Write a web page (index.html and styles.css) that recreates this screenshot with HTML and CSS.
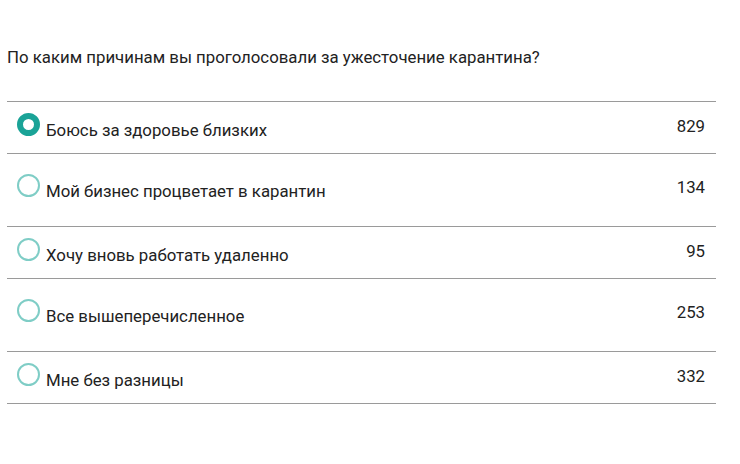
FILE: index.html
```html
<!doctype html>
<html lang="ru">
  <head>
    <meta charset="UTF-8" />
    <meta name="viewport" content="width=device-width, initial-scale=1.0" />
    <title>Опрос</title>
    <link rel="stylesheet" href="styles.css">
  </head>

  <body>
    <div class="poll">
      <p class="question">По каким причинам вы проголосовали за ужесточение карантина?</p>
      <ul class="options">
        <li class="option">
          <span class="radio checked"></span>
          <span class="label">Боюсь за здоровье близких</span>
          <span class="count">829</span>
        </li>
        <li class="option tall">
          <span class="radio"></span>
          <span class="label">Мой бизнес процветает в карантин</span>
          <span class="count">134</span>
        </li>
        <li class="option">
          <span class="radio"></span>
          <span class="label">Хочу вновь работать удаленно</span>
          <span class="count">95</span>
        </li>
        <li class="option tall">
          <span class="radio"></span>
          <span class="label">Все вышеперечисленное</span>
          <span class="count">253</span>
        </li>
        <li class="option">
          <span class="radio"></span>
          <span class="label">Мне без разницы</span>
          <span class="count">332</span>
        </li>
      </ul>
    </div>
  </body>
</html>
```

FILE: styles.css
```css
body {
  margin: 0;
  background: #ffffff;
  font-family: Roboto, "Noto Sans", sans-serif;
  color: #222222;
}

.poll {
  width: 709px;
  padding: 47px 0 0 7px;
}

.question {
  margin: 0 0 34px;
  font-size: 16.8px;
  line-height: 20px;
}

.options {
  list-style: none;
  margin: 0;
  padding: 0;
  border-top: 1px solid #9a9a9a;
}

.option {
  display: flex;
  align-items: flex-start;
  height: 51px;
  padding: 0 11px 0 10px;
  border-bottom: 1px solid #9a9a9a;
  font-size: 16.8px;
  line-height: 20px;
}

.option.tall {
  height: 72px;
}

.radio {
  box-sizing: border-box;
  width: 23px;
  height: 23px;
  margin-top: 11px;
  margin-right: 6px;
  border: 2px solid #7fcdc6;
  border-radius: 50%;
}

.radio.checked {
  border: 6px solid #1aa397;
}

.tall .radio {
  margin-top: 20px;
}

.label {
  flex: 1;
  padding-top: 18px;
}

.tall .label {
  padding-top: 27px;
}

.count {
  padding-top: 14px;
}

.tall .count {
  padding-top: 23px;
}
```
